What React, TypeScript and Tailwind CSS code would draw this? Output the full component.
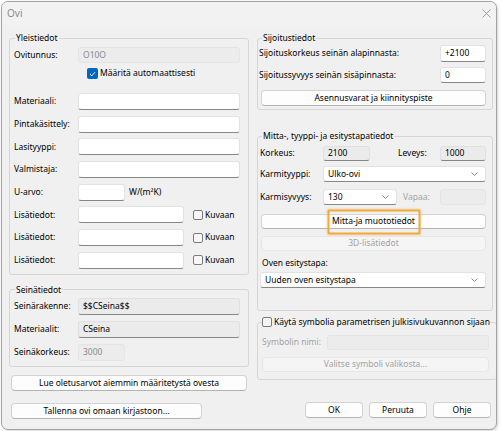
import type { ReactNode } from "react";

function Chevron() {
  return (
    <svg width="7" height="4" viewBox="0 0 7 4" className="shrink-0">
      <path d="M0.5 0.5 L3.5 3.5 L6.5 0.5" fill="none" stroke="#707070" strokeWidth="0.8" />
    </svg>
  );
}

function Box({ checked = false }: { checked?: boolean }) {
  if (checked) {
    return (
      <span className="grid h-[11px] w-[11px] shrink-0 place-items-center rounded-[2px] bg-[#0067c0]">
        <svg width="7" height="6" viewBox="0 0 7 6">
          <path d="M1 3.1 L2.8 4.8 L6 1.2" fill="none" stroke="#fff" strokeWidth="0.9" />
        </svg>
      </span>
    );
  }
  return <span className="block h-[10px] w-[10px] shrink-0 rounded-[2px] border border-[#7a7a7a] bg-[#f6f6f6]" />;
}

const field = "flex h-full items-center rounded-[3px] border px-[4px] leading-none";

// valkoinen muokattava kenttä
function Field({ value = "", className = "" }: { value?: string; className?: string }) {
  return <div className={`${field} border-[#e2e2e2] border-b-[#878787] bg-white ${className}`}>{value}</div>;
}

// vain luku, mutta aktiivinen
function ReadField({ value, className = "" }: { value: string; className?: string }) {
  return <div className={`${field} border-[#e0e0e0] border-b-[#878787] bg-[#ebebeb] ${className}`}>{value}</div>;
}

function OffField({ value = "", className = "" }: { value?: string; className?: string }) {
  return (
    <div className={`${field} border-[#e4e4e4] bg-[#ececec] text-[#8a8a8a] ${className}`}>{value}</div>
  );
}

function Select({ value, className = "" }: { value: string; className?: string }) {
  return (
    <div
      className={`flex h-full items-center justify-between rounded-[3px] border border-[#e2e2e2] border-b-[#878787] bg-white pl-[4px] pr-[7px] leading-none ${className}`}
    >
      <span>{value}</span>
      <Chevron />
    </div>
  );
}

function Btn({
  children,
  disabled = false,
  className = "",
}: {
  children: ReactNode;
  disabled?: boolean;
  className?: string;
}) {
  return (
    <div
      className={`relative flex items-center justify-center rounded-[4px] border leading-none ${
        disabled
          ? "border-[#e6e6e6] bg-[#f5f5f5] text-[#a3a3a3]"
          : "border-[#d3d3d3] border-b-[#b3b3b3] bg-[#fdfdfd] text-black"
      } ${className}`}
    >
      {children}
    </div>
  );
}

function Row({ label, children, className = "" }: { label: string; children: ReactNode; className?: string }) {
  return (
    <div className={`flex items-center ${className}`}>
      <span className="w-[64px] shrink-0">{label}</span>
      {children}
    </div>
  );
}

const group = "rounded-[3px] border border-[#d6d6d6]";

export default function App() {
  return (
    <div className="h-[431px] w-[502px] bg-white font-['Segoe_UI','Noto_Sans',sans-serif] text-[8.5px] text-black">
      <div className="ml-px mt-px h-[429px] w-[496px] overflow-hidden rounded-[7px] border border-[#a3a3a3] bg-[#f0f0f0] shadow-[1px_1px_3px_rgba(0,0,0,0.18)]">
        <div className="flex h-[23px] items-center justify-between bg-[#f2f2f2] pl-[5px] pr-[5px]">
          <span className="text-[10px] text-[#8e8e8e]">Ovi</span>
          <svg width="9" height="9" viewBox="0 0 9 9">
            <path d="M0.5 0.5 L8.5 8.5 M8.5 0.5 L0.5 8.5" stroke="#8a8a8a" strokeWidth="0.8" />
          </svg>
        </div>

        <div className="flex gap-[8px] pl-[7px] pt-[7px]">
          {/* vasen sarake */}
          <div className="flex w-[240px] flex-col">
            <fieldset className={`${group} pb-[5px] pl-[4px] pr-[8px]`}>
              <legend className="ml-px px-px leading-[12px]">Yleistiedot</legend>
              <Row label="Ovitunnus:" className="mt-[3px] h-[16px]">
                <OffField value="O10O" className="flex-1" />
              </Row>
              <div className="mt-[5px] flex h-[11px] items-center gap-[2px] pl-[73px]">
                <Box checked />
                <span>Määritä automaattisesti</span>
              </div>
              <Row label="Materiaali:" className="mt-[14px] h-[17px]">
                <Field className="flex-1" />
              </Row>
              <Row label="Pintakäsittely:" className="mt-[5.7px] h-[17px]">
                <Field className="flex-1" />
              </Row>
              <Row label="Lasityyppi:" className="mt-[5.7px] h-[17px]">
                <Field className="flex-1" />
              </Row>
              <Row label="Valmistaja:" className="mt-[5.7px] h-[17px]">
                <Field className="flex-1" />
              </Row>
              <Row label="U-arvo:" className="mt-[5.7px] h-[17px]">
                <Field className="w-[47px]" />
                <span className="ml-[4px]">W/(m²K)</span>
              </Row>
              {[0, 1, 2].map((i) => (
                <Row key={i} label="Lisätiedot:" className="mt-[5.7px] h-[17px]">
                  <Field className="w-[106px]" />
                  <span className="ml-[9px] flex">
                    <Box />
                  </span>
                  <span className="ml-[2px]">Kuvaan</span>
                </Row>
              ))}
            </fieldset>

            <fieldset className={`${group} mt-[9px] pb-[5px] pl-[4px] pr-[8px]`}>
              <legend className="ml-px px-px leading-[12px]">Seinätiedot</legend>
              <Row label="Seinärakenne:" className="mt-[2px] h-[17px]">
                <ReadField value="$$CSeina$$" className="flex-1" />
              </Row>
              <Row label="Materiaalit:" className="mt-[6px] h-[17px]">
                <ReadField value="CSeina" className="flex-1" />
              </Row>
              <Row label="Seinäkorkeus:" className="mt-[6px] h-[17px]">
                <OffField value="3000" className="w-[47px]" />
              </Row>
            </fieldset>

            <Btn className="ml-[2px] mt-[8px] h-[16px] w-[236px]">Lue oletusarvot aiemmin määritetystä ovesta</Btn>
            <Btn className="ml-[2px] mt-[12px] h-[16px] w-[191px]">Tallenna ovi omaan kirjastoon...</Btn>
          </div>

          {/* oikea sarake */}
          <div className="flex w-[236px] flex-col">
            <fieldset className={`${group} pb-[3px] pl-px pr-[6px]`}>
              <legend className="ml-[3px] px-px leading-[12px]">Sijoitustiedot</legend>
              <div className="mt-px flex h-[17px] items-center">
                <span className="flex-1">Sijoituskorkeus seinän alapinnasta:</span>
                <Field value="+2100" className="w-[46px]" />
              </div>
              <div className="mt-[5px] flex h-[16px] items-center">
                <span className="flex-1">Sijoitussyvyys seinän sisäpinnasta:</span>
                <Field value="0" className="w-[46px]" />
              </div>
              <Btn className="ml-[2px] mt-[7px] h-[16px]">Asennusvarat ja kiinnityspiste</Btn>
            </fieldset>

            <fieldset className={`${group} mt-[20px] pb-[22px] pl-px pr-[6px]`}>
              <legend className="ml-[3px] px-px leading-[12px]">Mitta-, tyyppi- ja esitystapatiedot</legend>
              <div className="mt-[4px] flex h-[15px] items-center">
                <span className="w-[64px] shrink-0 pl-px">Korkeus:</span>
                <ReadField value="2100" className="w-[47px]" />
                <span className="ml-[28px] flex-1">Leveys:</span>
                <ReadField value="1000" className="w-[46px]" />
              </div>
              <div className="mt-[5px] flex h-[16px] items-center">
                <span className="w-[64px] shrink-0 pl-px">Karmityyppi:</span>
                <Select value="Ulko-ovi" className="flex-1" />
              </div>
              <div className="mt-[7px] flex h-[16px] items-center">
                <span className="w-[64px] shrink-0 pl-px">Karmisyvyys:</span>
                <Select value="130" className="w-[74px]" />
                <span className="ml-[6px] flex-1 text-[#a3a3a3]">Vapaa:</span>
                <OffField className="w-[46px]" />
              </div>
              <Btn className="ml-[2px] mt-[9px] h-[15px]">
                Mitta-ja muototiedot
                <span className="pointer-events-none absolute left-1/2 top-1/2 h-[25px] w-[93px] -translate-x-1/2 -translate-y-1/2 rounded-[2px] border-2 border-[#f3a83a] shadow-[0_0_2px_rgba(243,168,58,0.6)]" />
              </Btn>
              <Btn disabled className="ml-[2px] mt-[7px] h-[15px]">
                3D-lisätiedot
              </Btn>
              <div className="mt-[6px] flex h-[12px] items-center pl-[3px]">Oven esitystapa:</div>
              <Select value="Uuden oven esitystapa" className="ml-px mt-[3px] !h-[16px]" />
            </fieldset>

            <fieldset className={`${group} mt-[5px] pb-[7px] pl-px pr-[6px]`}>
              <legend className="ml-[3px] flex items-center gap-[2px] whitespace-nowrap leading-[12px]">
                <Box />
                <span>Käytä symbolia parametrisen julkisivukuvannon sijaan</span>
              </legend>
              <div className="mt-[7px] flex h-[15px] items-center">
                <span className="w-[68px] shrink-0 pl-[3px] text-[#a3a3a3]">Symbolin nimi:</span>
                <OffField className="mr-px flex-1" />
              </div>
              <Btn disabled className="ml-[3px] mr-px mt-[7px] h-[15px]">
                Valitse symboli valikosta...
              </Btn>
            </fieldset>

            <div className="mt-[22px] flex justify-end gap-[6px] pr-[2px]">
              <Btn className="h-[16px] w-[58px]">OK</Btn>
              <Btn className="h-[16px] w-[58px]">Peruuta</Btn>
              <Btn className="h-[16px] w-[58px]">Ohje</Btn>
            </div>
          </div>
        </div>
      </div>
    </div>
  );
}
